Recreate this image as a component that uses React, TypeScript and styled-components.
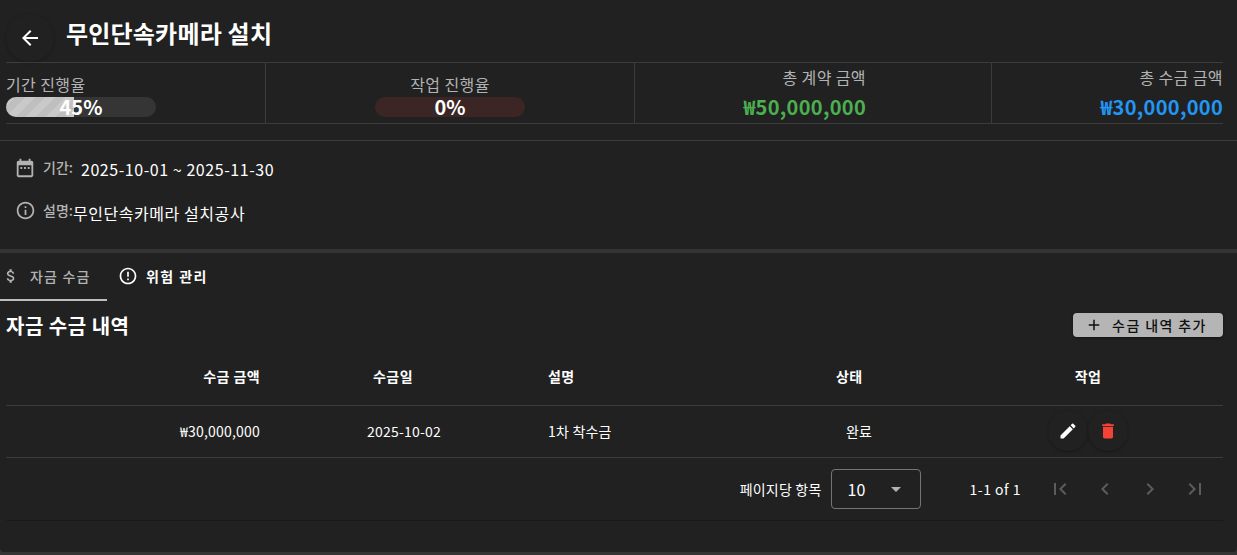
import React from 'react';
import styled, { createGlobalStyle } from 'styled-components';

const GlobalStyle = createGlobalStyle`
  html, body {
    margin: 0;
    padding: 0;
    background: #343434;
    font-family: "Noto Sans CJK KR", sans-serif;
    color: #fff;
  }
  * { box-sizing: border-box; }
`;

const Page = styled.div`
  width: 1237px;
  height: 555px;
  overflow: hidden;
  display: flex;
  flex-direction: column;
  gap: 4px;
`;

const InfoPaper = styled.section`
  height: 249px;
  background: #212121;
  display: flex;
  flex-direction: column;
`;

const ListPaper = styled.section`
  height: 299px;
  background: #212121;
  border-radius: 0 0 4px 4px;
  display: flex;
  flex-direction: column;
`;

const Header = styled.header`
  height: 62px;
  margin: 0 14px 0 6px;
  display: flex;
  align-items: flex-start;
  gap: 12px;
`;

const BackButton = styled.button`
  width: 48px;
  height: 48px;
  margin-top: 14px;
  padding: 0;
  border: 0;
  border-radius: 50%;
  background: #212121;
  color: #fff;
  display: flex;
  align-items: center;
  justify-content: center;
  box-shadow: 0 1px 3px rgba(0, 0, 0, 0.25);
`;

const Title = styled.h1`
  margin: 15px 0 0;
  font-size: 24px;
  line-height: 36px;
  font-weight: 700;
  letter-spacing: 0.2px;
  color: #fff;
`;

const StatsRow = styled.div`
  height: 62px;
  margin: 0 14px 0 6px;
  border-top: 1px solid #3c3c3c;
  border-bottom: 1px solid #3c3c3c;
  display: grid;
  grid-template-columns: 259px 369px 357px 232px;
`;

const StatCell = styled.div<{ $align: 'left' | 'center' | 'right'; $inset?: number; $top: number }>`
  display: flex;
  flex-direction: column;
  padding-top: ${props => props.$top}px;
  padding-right: ${props => props.$inset || 0}px;
  align-items: ${props =>
    props.$align === 'left' ? 'flex-start' : props.$align === 'center' ? 'center' : 'flex-end'};
  & + & {
    border-left: 1px solid #3c3c3c;
  }
`;

const StatLabel = styled.div`
  font-size: 16px;
  line-height: 24px;
  letter-spacing: 0.4px;
  color: #b3b3b3;
`;

const ProgressWrap = styled.div`
  position: relative;
  width: 150px;
  height: 20px;
  margin-top: 1px;
`;

const ProgressTrack = styled.div<{ $danger?: boolean }>`
  width: 100%;
  height: 100%;
  border-radius: 10px;
  overflow: hidden;
  background: ${props => (props.$danger ? '#3b2625' : '#353535')};
`;

const ProgressFill = styled.div`
  height: 100%;
  background-color: #bfbfbf;
  background-image: linear-gradient(
    135deg,
    rgba(255, 255, 255, 0.15) 25%,
    transparent 25%,
    transparent 50%,
    rgba(255, 255, 255, 0.15) 50%,
    rgba(255, 255, 255, 0.15) 75%,
    transparent 75%
  );
  background-size: 20px 20px;
`;

const ProgressText = styled.div`
  position: absolute;
  inset: 0;
  display: flex;
  align-items: center;
  justify-content: center;
  font-size: 20px;
  font-weight: 700;
  line-height: 20px;
  color: #fff;
`;

const Amount = styled.div<{ $color: string }>`
  margin-top: 7px;
  font-size: 20px;
  font-weight: 700;
  line-height: 22px;
  letter-spacing: 0.3px;
  color: ${props => props.$color};
`;

const Details = styled.div`
  margin-top: 16px;
  border-top: 1px solid #3c3c3c;
  padding: 16px 0 0 14px;
  display: flex;
  flex-direction: column;
  gap: 19px;
`;

const DetailRow = styled.div`
  height: 24px;
  display: flex;
  align-items: center;
`;

const DetailIcon = styled.span`
  width: 22px;
  height: 22px;
  margin: 0 7px 3px 0;
  color: #b3b3b3;
  display: flex;
  align-items: center;
  justify-content: center;
`;

const DetailLabel = styled.span<{ $gap: number }>`
  font-size: 14px;
  font-weight: 500;
  color: #b3b3b3;
  margin: 0 ${props => props.$gap}px 4px 0;
`;

const DetailValue = styled.span<{ $down?: number }>`
  font-size: 16px;
  letter-spacing: 0.56px;
  margin-top: ${props => props.$down || 0}px;
  color: #fff;
`;

const Tabs = styled.nav`
  height: 48px;
  display: flex;
`;

const Tab = styled.div<{ $active?: boolean; $width: number; $pl: number; $gap: number }>`
  width: ${props => props.$width}px;
  height: 48px;
  padding: 0 0 0 ${props => props.$pl}px;
  display: flex;
  align-items: center;
  gap: ${props => props.$gap}px;
  font-size: 14px;
  font-weight: ${props => (props.$active ? 500 : 700)};
  letter-spacing: ${props => (props.$active ? 1.2 : 1.4)}px;
  color: ${props => (props.$active ? '#b3b3b3' : '#fff')};
  border-bottom: 2px solid ${props => (props.$active ? '#bdbdbd' : 'transparent')};
`;

const SectionHead = styled.div`
  height: 48px;
  margin: 0 14px 0 6px;
  display: flex;
  align-items: center;
  justify-content: space-between;
`;

const SectionTitle = styled.h2`
  margin: 0;
  font-size: 20px;
  font-weight: 700;
  letter-spacing: 0.5px;
  color: #fff;
`;

const AddButton = styled.button`
  width: 150px;
  height: 24px;
  padding: 0 4px 0 0;
  border: 0;
  border-radius: 4px;
  background: #b5b5b5;
  color: #0f0f0f;
  display: flex;
  align-items: center;
  justify-content: center;
  gap: 9px;
  font-family: inherit;
  font-size: 14px;
  font-weight: 500;
  letter-spacing: 1.4px;
  box-shadow: 0 1px 3px rgba(0, 0, 0, 0.4);
`;

const TableRow = styled.div<{ $height: number }>`
  height: ${props => props.$height}px;
  margin: 0 14px 0 6px;
  padding-bottom: 2px;
  border-bottom: 1px solid #3c3c3c;
  display: grid;
  grid-template-columns: 270px 256px 258px 163px 270px;
  align-items: center;
`;

const HeadCell = styled.div<{ $align: string; $pl?: number; $pr?: number }>`
  font-size: 14px;
  font-weight: 700;
  letter-spacing: 0.4px;
  color: #fff;
  text-align: ${props => props.$align};
  padding-left: ${props => props.$pl || 0}px;
  padding-right: ${props => props.$pr || 0}px;
`;

const BodyCell = styled.div<{ $align: string; $pl?: number; $pr?: number }>`
  font-size: 14px;
  font-weight: 400;
  letter-spacing: 0.2px;
  color: #fff;
  text-align: ${props => props.$align};
  padding-left: ${props => props.$pl || 0}px;
  padding-right: ${props => props.$pr || 0}px;
`;

const ActionCell = styled.div`
  display: flex;
  justify-content: center;
`;

const ActionButton = styled.button<{ $color: string }>`
  width: 40px;
  height: 40px;
  padding: 0;
  border: 0;
  border-radius: 50%;
  background: #212121;
  color: ${props => props.$color};
  display: flex;
  align-items: center;
  justify-content: center;
  box-shadow: 0 1px 3px rgba(0, 0, 0, 0.25);
`;

const Pagination = styled.div`
  height: 63px;
  margin: 0 14px 0 6px;
  padding-right: 8px;
  border-bottom: 1px solid #1a1a1a;
  display: flex;
  align-items: center;
  justify-content: flex-end;
  font-size: 14px;
  color: #fff;
`;

const PerPageLabel = styled.span`
  margin-right: 9px;
  font-weight: 400;
  letter-spacing: 0.2px;
`;

const PerPageSelect = styled.div`
  width: 90px;
  height: 40px;
  padding: 0 12px 0 16px;
  border: 1px solid #757575;
  border-radius: 4px;
  display: flex;
  align-items: center;
  justify-content: space-between;
  font-size: 16px;
  margin-right: 49px;
`;

const PageCount = styled.span`
  margin-right: 19px;
  letter-spacing: 0.5px;
`;

const PageButtons = styled.div`
  display: flex;
  gap: 5px;
`;

const PageButton = styled.span`
  width: 40px;
  height: 40px;
  color: #5c5c5c;
  display: flex;
  align-items: center;
  justify-content: center;
`;

const Icon = ({ d, size = 24, color }: { d: string; size?: number; color?: string }) => (
  <svg width={size} height={size} viewBox="0 0 24 24" fill={color || 'currentColor'} style={{ flexShrink: 0 }}>
    <path d={d} />
  </svg>
);

const paths = {
  back: 'M20 11H7.83l5.59-5.59L12 4l-8 8 8 8 1.41-1.41L7.83 13H20v-2z',
  calendar:
    'M9 11H7v2h2v-2zm4 0h-2v2h2v-2zm4 0h-2v2h2v-2zm2-7h-1V2h-2v2H8V2H6v2H5c-1.11 0-1.99.9-1.99 2L3 20c0 1.1.89 2 2 2h14c1.1 0 2-.9 2-2V6c0-1.1-.9-2-2-2zm0 16H5V9h14v11z',
  info: 'M11 7h2v2h-2zm0 4h2v6h-2zm1-9C6.48 2 2 6.48 2 12s4.48 10 10 10 10-4.48 10-10S17.52 2 12 2zm0 18c-4.41 0-8-3.59-8-8s3.59-8 8-8 8 3.59 8 8-3.59 8-8 8z',
  money:
    'M11.8 10.9c-2.27-.59-3-1.2-3-2.15 0-1.09 1.01-1.85 2.7-1.85 1.78 0 2.44.85 2.5 2.1h2.21c-.07-1.72-1.12-3.3-3.21-3.81V3h-3v2.16c-1.94.42-3.5 1.68-3.5 3.61 0 2.31 1.91 3.46 4.7 4.13 2.5.6 3 1.48 3 2.41 0 .69-.49 1.79-2.7 1.79-2.06 0-2.87-.92-2.98-2.1h-2.2c.12 2.19 1.76 3.42 3.68 3.83V21h3v-2.15c1.95-.37 3.5-1.5 3.5-3.55 0-2.84-2.43-3.81-4.7-4.4z',
  warning:
    'M11 15h2v2h-2zm0-8h2v6h-2zm.99-5C6.47 2 2 6.48 2 12s4.47 10 9.99 10C17.52 22 22 17.52 22 12S17.52 2 11.99 2zM12 20c-4.42 0-8-3.58-8-8s3.58-8 8-8 8 3.58 8 8-3.58 8-8 8z',
  add: 'M19 13h-6v6h-2v-6H5v-2h6V5h2v6h6v2z',
  edit: 'M3 17.25V21h3.75L17.81 9.94l-3.75-3.75L3 17.25zM20.71 7.04c.39-.39.39-1.02 0-1.41l-2.34-2.34a.9959.9959 0 0 0-1.41 0l-1.83 1.83 3.75 3.75 1.83-1.83z',
  trash: 'M6 19c0 1.1.9 2 2 2h8c1.1 0 2-.9 2-2V7H6v12zM19 4h-3.5l-1-1h-5l-1 1H5v2h14V4z',
  first: 'M18.41 16.59L13.82 12l4.59-4.59L17 6l-6 6 6 6zM6 6h2v12H6z',
  prev: 'M15.41 16.59L10.83 12l4.58-4.59L14 6l-6 6 6 6 1.41-1.41z',
  next: 'M8.59 16.59L13.17 12 8.59 7.41 10 6l6 6-6 6-1.41-1.41z',
  last: 'M5.59 7.41L10.18 12l-4.59 4.59L7 18l6-6-6-6zM16 6h2v12h-2z',
  dropdown: 'M7 10l5 5 5-5z',
};

export default function App() {
  return (
    <Page>
      <GlobalStyle />
      <InfoPaper>
        <Header>
          <BackButton aria-label="back">
            <Icon d={paths.back} />
          </BackButton>
          <Title>무인단속카메라 설치</Title>
        </Header>

        <StatsRow>
          <StatCell $align="left" $top={9}>
            <StatLabel>기간 진행율</StatLabel>
            <ProgressWrap>
              <ProgressTrack>
                <ProgressFill style={{ width: '45%' }} />
              </ProgressTrack>
              <ProgressText>45%</ProgressText>
            </ProgressWrap>
          </StatCell>
          <StatCell $align="center" $top={9}>
            <StatLabel>작업 진행율</StatLabel>
            <ProgressWrap>
              <ProgressTrack $danger />
              <ProgressText>0%</ProgressText>
            </ProgressWrap>
          </StatCell>
          <StatCell $align="right" $inset={125} $top={2}>
            <StatLabel>총 계약 금액</StatLabel>
            <Amount $color="#4caf50">₩50,000,000</Amount>
          </StatCell>
          <StatCell $align="right" $top={2}>
            <StatLabel>총 수금 금액</StatLabel>
            <Amount $color="#2196f3">₩30,000,000</Amount>
          </StatCell>
        </StatsRow>

        <Details>
          <DetailRow>
            <DetailIcon>
              <Icon d={paths.calendar} size={22} />
            </DetailIcon>
            <DetailLabel $gap={8}>기간:</DetailLabel>
            <DetailValue>2025-10-01 ~ 2025-11-30</DetailValue>
          </DetailRow>
          <DetailRow>
            <DetailIcon>
              <Icon d={paths.info} size={21} />
            </DetailIcon>
            <DetailLabel $gap={0}>설명:</DetailLabel>
            <DetailValue $down={1}>무인단속카메라 설치공사</DetailValue>
          </DetailRow>
        </Details>
      </InfoPaper>

      <ListPaper>
        <Tabs>
          <Tab $active $width={107} $pl={2} $gap={10}>
            <Icon d={paths.money} size={18} />
            자금 수금
          </Tab>
          <Tab $width={110} $pl={11} $gap={8}>
            <Icon d={paths.warning} size={20} />
            위험 관리
          </Tab>
        </Tabs>

        <SectionHead>
          <SectionTitle>자금 수금 내역</SectionTitle>
          <AddButton>
            <Icon d={paths.add} size={18} />
            수금 내역 추가
          </AddButton>
        </SectionHead>

        <TableRow $height={57}>
          <HeadCell $align="right" $pr={16}>수금 금액</HeadCell>
          <HeadCell $align="center" $pr={22}>수금일</HeadCell>
          <HeadCell $align="left" $pl={16}>설명</HeadCell>
          <HeadCell $align="left" $pl={46}>상태</HeadCell>
          <HeadCell $align="center">작업</HeadCell>
        </TableRow>
        <TableRow $height={52}>
          <BodyCell $align="right" $pr={16}>₩30,000,000</BodyCell>
          <BodyCell $align="center">2025-10-02</BodyCell>
          <BodyCell $align="left" $pl={16}>1차 착수금</BodyCell>
          <BodyCell $align="left" $pl={56}>완료</BodyCell>
          <ActionCell>
            <ActionButton $color="#ffffff" aria-label="edit">
              <Icon d={paths.edit} size={20} />
            </ActionButton>
            <ActionButton $color="#f44336" aria-label="delete">
              <Icon d={paths.trash} size={20} />
            </ActionButton>
          </ActionCell>
        </TableRow>

        <Pagination>
          <PerPageLabel>페이지당 항목</PerPageLabel>
          <PerPageSelect>
            10
            <Icon d={paths.dropdown} color="#b3b3b3" />
          </PerPageSelect>
          <PageCount>1-1 of 1</PageCount>
          <PageButtons>
            <PageButton><Icon d={paths.first} /></PageButton>
            <PageButton><Icon d={paths.prev} /></PageButton>
            <PageButton><Icon d={paths.next} /></PageButton>
            <PageButton><Icon d={paths.last} /></PageButton>
          </PageButtons>
        </Pagination>
      </ListPaper>
    </Page>
  );
}
